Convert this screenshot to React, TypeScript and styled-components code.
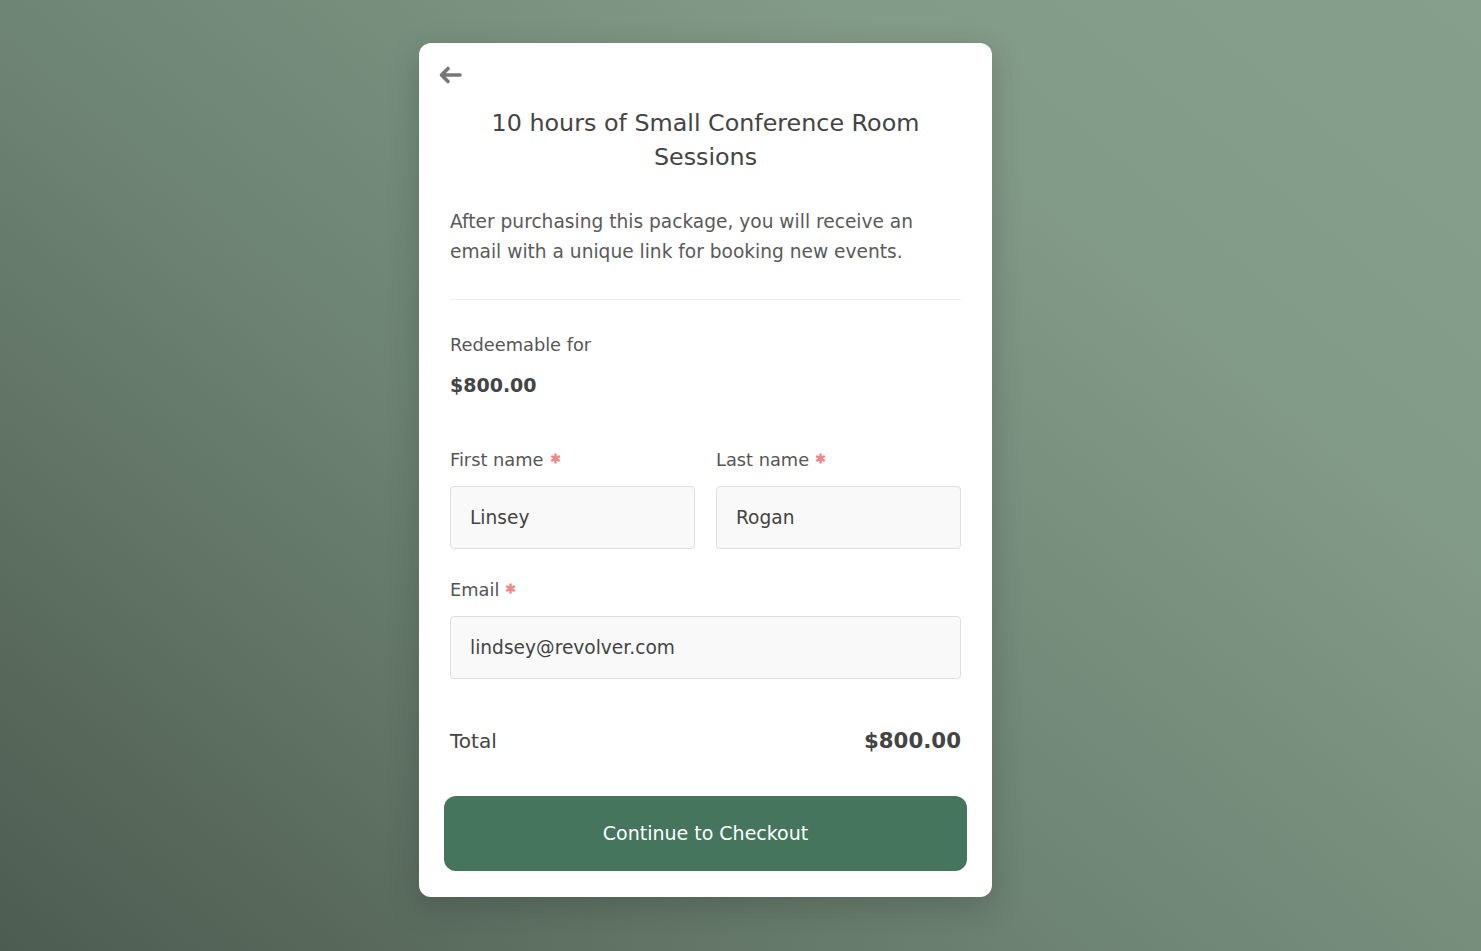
import React from "react";
import styled, { createGlobalStyle } from "styled-components";

const GlobalStyle = createGlobalStyle`
  html, body {
    margin: 0;
    padding: 0;
  }
  body {
    font-family: "DejaVu Sans", "Noto Sans", sans-serif;
    color: #444;
  }
  * {
    box-sizing: border-box;
  }
`;

const Page = styled.div`
  width: 100%;
  min-height: 951px;
  background: linear-gradient(40deg, #4d5c50 0%, #6d8272 40%, #829a88 75%, #869e8c 100%);
  display: flex;
  justify-content: center;
  align-items: flex-start;
  padding: 43px 70px 0 0;
`;

const Card = styled.div`
  width: 573px;
  height: 854px;
  background: #fff;
  border-radius: 12px;
  box-shadow: 0 10px 30px rgba(30, 45, 35, 0.25);
  padding: 20px 25px 25px;
  display: flex;
  flex-direction: column;
`;

const BackButton = styled.button`
  align-self: flex-start;
  background: none;
  border: none;
  padding: 0;
  margin-left: -7px;
  width: 26px;
  height: 24px;
  display: flex;
  align-items: center;
  justify-content: center;
  color: #777;
  cursor: pointer;
`;

const Title = styled.h1`
  margin: 19px 0 0;
  font-size: 23.8px;
  font-weight: 400;
  line-height: 34px;
  text-align: center;
  color: #444;
  padding: 0 40px;
`;

const Body = styled.div`
  padding: 0 6px;
  display: flex;
  flex-direction: column;
`;

const Description = styled.p`
  margin: 33px 0 0;
  font-size: 18.6px;
  line-height: 30px;
  color: #5a5a5a;
`;

const Divider = styled.hr`
  border: none;
  border-top: 1px solid #efefef;
  margin: 32px 0 0;
`;

const SmallLabel = styled.div`
  margin-top: 33px;
  font-size: 17.8px;
  line-height: 24px;
  color: #555;
`;

const Amount = styled.div`
  margin-top: 16px;
  font-size: 19px;
  font-weight: 700;
  line-height: 24px;
  color: #444;
`;

const Row = styled.div<{ $top: number }>`
  display: grid;
  grid-template-columns: 1fr 1fr;
  column-gap: 21px;
  margin-top: ${(p) => p.$top}px;
`;

const Field = styled.div<{ $top?: number }>`
  display: flex;
  flex-direction: column;
  margin-top: ${(p) => p.$top ?? 0}px;
`;

const FieldLabel = styled.label`
  font-size: 17.8px;
  line-height: 24px;
  color: #555;
  display: flex;
  align-items: center;
`;

const Required = styled.svg`
  margin-left: 6px;
  margin-top: -4px;
  width: 11px;
  height: 11px;
`;

const Input = styled.input`
  margin-top: 14px;
  height: 63px;
  width: 100%;
  background: #f9f9f9;
  border: 1px solid #dedede;
  border-radius: 4px;
  padding: 0 19px;
  font-family: inherit;
  font-size: 18.6px;
  color: #444;
  outline: none;
`;

const TotalRow = styled.div`
  display: flex;
  justify-content: space-between;
  align-items: center;
  margin-top: 49px;
`;

const TotalLabel = styled.span`
  font-size: 20px;
  color: #444;
`;

const TotalValue = styled.span`
  font-size: 21.3px;
  font-weight: 700;
  color: #444;
`;

const CheckoutButton = styled.button`
  margin-top: 43px;
  height: 75px;
  width: 100%;
  border: none;
  border-radius: 12px;
  background: #45755d;
  color: #fff;
  font-family: inherit;
  font-size: 19px;
  font-weight: 500;
  padding-bottom: 3px;
  cursor: pointer;
`;

const Star = () => (
  <Required viewBox="0 0 11 11" aria-hidden="true">
    <path
      d="M5.5 0.5V10.5M1.2 3L9.8 8M9.8 3L1.2 8"
      stroke="#f58484"
      strokeWidth="2.4"
    />
  </Required>
);

export default function App() {
  return (
    <>
      <GlobalStyle />
      <Page>
        <Card>
          <BackButton aria-label="Back">
            <svg width="26" height="20" viewBox="0 0 26 20" fill="none">
              <path
                d="M23 10H5M11 3.5L4.5 10L11 16.5"
                stroke="currentColor"
                strokeWidth="3.6"
                strokeLinecap="round"
                strokeLinejoin="round"
              />
            </svg>
          </BackButton>
          <Title>10 hours of Small Conference Room Sessions</Title>
          <Body>
            <Description>
              After purchasing this package, you will receive an email with a
              unique link for booking new events.
            </Description>
            <Divider />
            <SmallLabel>Redeemable for</SmallLabel>
            <Amount>$800.00</Amount>
            <Row $top={51}>
              <Field>
                <FieldLabel>
                  First name
                  <Star />
                </FieldLabel>
                <Input defaultValue="Linsey" />
              </Field>
              <Field>
                <FieldLabel>
                  Last name
                  <Star />
                </FieldLabel>
                <Input defaultValue="Rogan" />
              </Field>
            </Row>
            <Field $top={29}>
              <FieldLabel>
                Email
                <Star />
              </FieldLabel>
              <Input defaultValue="lindsey@revolver.com" />
            </Field>
            <TotalRow>
              <TotalLabel>Total</TotalLabel>
              <TotalValue>$800.00</TotalValue>
            </TotalRow>
          </Body>
          <CheckoutButton>Continue to Checkout</CheckoutButton>
        </Card>
      </Page>
    </>
  );
}
